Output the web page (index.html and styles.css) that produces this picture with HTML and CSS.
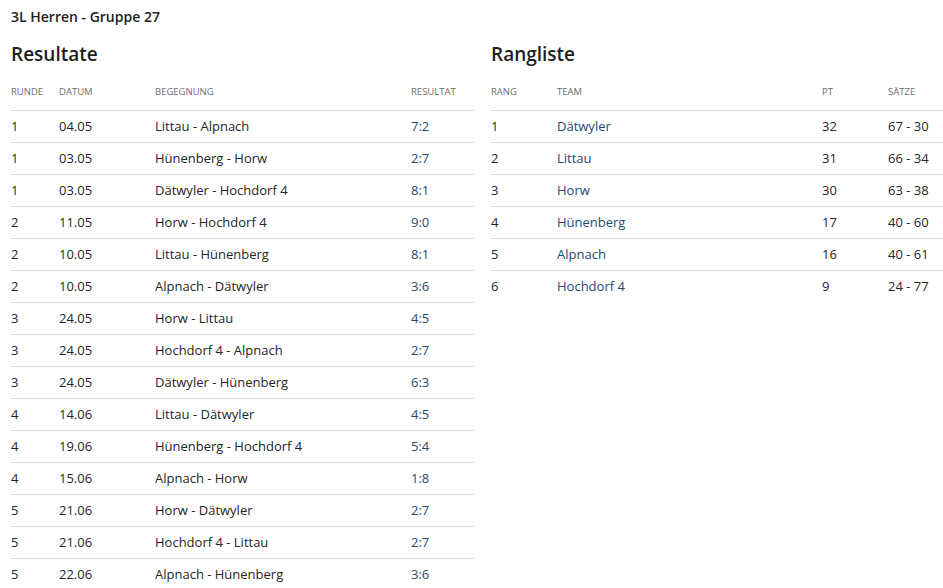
FILE: index.html
```html
<!DOCTYPE html>
<html lang="de">
	<head>
		<meta charset="UTF-8" />
		<link rel="stylesheet" href="styles.css">
		<title>3L Herren - Gruppe 27</title>
	</head>
	<body>
		<h1 class="group-title">3L Herren - Gruppe 27</h1>
		<div class="columns">
			<div class="panel">
				<h2 class="panel-title">Resultate</h2>
				<table class="table results">
					<thead>
						<tr><th>Runde</th><th>Datum</th><th>Begegnung</th><th>Resultat</th></tr>
					</thead>
					<tbody>
						<tr><td>1</td><td>04.05</td><td>Littau - Alpnach</td><td class="link">7:2</td></tr>
						<tr><td>1</td><td>03.05</td><td>Hünenberg - Horw</td><td class="link">2:7</td></tr>
						<tr><td>1</td><td>03.05</td><td>Dätwyler - Hochdorf 4</td><td class="link">8:1</td></tr>
						<tr><td>2</td><td>11.05</td><td>Horw - Hochdorf 4</td><td class="link">9:0</td></tr>
						<tr><td>2</td><td>10.05</td><td>Littau - Hünenberg</td><td class="link">8:1</td></tr>
						<tr><td>2</td><td>10.05</td><td>Alpnach - Dätwyler</td><td class="link">3:6</td></tr>
						<tr><td>3</td><td>24.05</td><td>Horw - Littau</td><td class="link">4:5</td></tr>
						<tr><td>3</td><td>24.05</td><td>Hochdorf 4 - Alpnach</td><td class="link">2:7</td></tr>
						<tr><td>3</td><td>24.05</td><td>Dätwyler - Hünenberg</td><td class="link">6:3</td></tr>
						<tr><td>4</td><td>14.06</td><td>Littau - Dätwyler</td><td class="link">4:5</td></tr>
						<tr><td>4</td><td>19.06</td><td>Hünenberg - Hochdorf 4</td><td class="link">5:4</td></tr>
						<tr><td>4</td><td>15.06</td><td>Alpnach - Horw</td><td class="link">1:8</td></tr>
						<tr><td>5</td><td>21.06</td><td>Horw - Dätwyler</td><td class="link">2:7</td></tr>
						<tr><td>5</td><td>21.06</td><td>Hochdorf 4 - Littau</td><td class="link">2:7</td></tr>
						<tr><td>5</td><td>22.06</td><td>Alpnach - Hünenberg</td><td class="link">3:6</td></tr>
					</tbody>
				</table>
			</div>
			<div class="panel">
				<h2 class="panel-title">Rangliste</h2>
				<table class="table ranking">
					<thead>
						<tr><th>Rang</th><th>Team</th><th>Pt</th><th>Sätze</th></tr>
					</thead>
					<tbody>
						<tr><td>1</td><td class="link">Dätwyler</td><td>32</td><td>67 - 30</td></tr>
						<tr><td>2</td><td class="link">Littau</td><td>31</td><td>66 - 34</td></tr>
						<tr><td>3</td><td class="link">Horw</td><td>30</td><td>63 - 38</td></tr>
						<tr><td>4</td><td class="link">Hünenberg</td><td>17</td><td>40 - 60</td></tr>
						<tr><td>5</td><td class="link">Alpnach</td><td>16</td><td>40 - 61</td></tr>
						<tr><td>6</td><td class="link">Hochdorf 4</td><td>9</td><td>24 - 77</td></tr>
					</tbody>
				</table>
			</div>
		</div>
	</body>
</html>
```

FILE: styles.css
```css
* {
	margin: 0;
	padding: 0;
	box-sizing: border-box;
}

body {
	font-family: "Open Sans", Arial, sans-serif;
	color: #222;
	background-color: #fff;
	padding: 7px 0 0 11px;
	overflow: hidden;
	width: 943px;
}

.group-title {
	font-size: 14px;
	font-weight: 600;
	line-height: 20px;
	color: #222;
}

.columns {
	display: grid;
	grid-template-columns: 463px 463px;
	column-gap: 17px;
	margin-top: 14px;
}

.panel-title {
	font-size: 19px;
	font-weight: 600;
	line-height: 26px;
	color: #1e1e1e;
}

.table {
	width: 100%;
	border-collapse: collapse;
	margin-top: 12px;
	font-size: 13px;
}

.table th {
	text-align: left;
	font-size: 9.5px;
	font-weight: 400;
	text-transform: uppercase;
	color: #6d6d6d;
	height: 31px;
	padding-top: 6px;
	vertical-align: top;
	border-bottom: 1px solid #d8dcdf;
}

.table td {
	height: 32px;
	border-bottom: 1px solid #d8dcdf;
	vertical-align: middle;
	color: #252525;
}

.table tbody tr:last-child td {
	border-bottom: none;
}

.table td.link {
	color: #1d4b70;
}

.results th:nth-child(1) { width: 48px; }
.results th:nth-child(2) { width: 96px; }
.results th:nth-child(3) { width: 256px; }

.ranking th:nth-child(1) { width: 66px; }
.ranking th:nth-child(2) { width: 265px; }
.ranking th:nth-child(3) { width: 66px; }
```
